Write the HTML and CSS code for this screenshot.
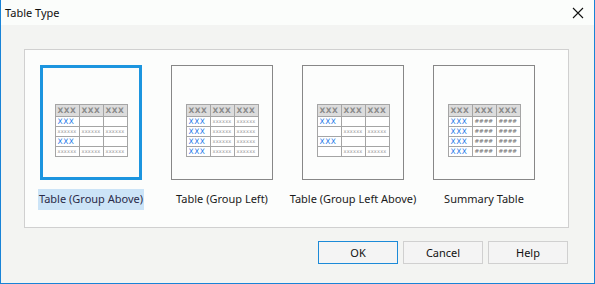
FILE: index.html
```html
<!DOCTYPE html>
<html lang="en">
  <head>
    <meta charset="UTF-8" />
    <title>Table Type</title>
    <link rel="stylesheet" href="styles.css">
  </head>
  <body>
    <div class="dialog">
      <div class="titlebar">
        <span class="title">Table Type</span>
        <svg class="close" width="12" height="12" viewBox="0 0 12 12">
          <path d="M1 1 L11 11 M11 1 L1 11" stroke="#111" stroke-width="1.1" />
        </svg>
      </div>
      <div class="content">
        <div class="panel">
          <div class="option">
            <div class="frame selected">
              <div class="mini">
                <div class="h">XXX</div><div class="h">XXX</div><div class="h">XXX</div>
                <div class="g">XXX</div><div></div><div></div>
                <div class="d">xxxxxx</div><div class="d">xxxxxx</div><div class="d">xxxxxx</div>
                <div class="g">XXX</div><div></div><div></div>
                <div class="d">xxxxxx</div><div class="d">xxxxxx</div><div class="d">xxxxxx</div>
              </div>
            </div>
            <div class="label selected">Table (Group Above)</div>
          </div>
          <div class="option">
            <div class="frame">
              <div class="mini">
                <div class="h">XXX</div><div class="h">XXX</div><div class="h">XXX</div>
                <div class="g">XXX</div><div class="d">xxxxxx</div><div class="d">xxxxxx</div>
                <div class="g">XXX</div><div class="d">xxxxxx</div><div class="d">xxxxxx</div>
                <div class="g">XXX</div><div class="d">xxxxxx</div><div class="d">xxxxxx</div>
                <div class="g">XXX</div><div class="d">xxxxxx</div><div class="d">xxxxxx</div>
              </div>
            </div>
            <div class="label">Table (Group Left)</div>
          </div>
          <div class="option">
            <div class="frame">
              <div class="mini">
                <div class="h">XXX</div><div class="h">XXX</div><div class="h">XXX</div>
                <div class="g">XXX</div><div></div><div></div>
                <div></div><div class="d">xxxxxx</div><div class="d">xxxxxx</div>
                <div class="g">XXX</div><div></div><div></div>
                <div></div><div class="d">xxxxxx</div><div class="d">xxxxxx</div>
              </div>
            </div>
            <div class="label">Table (Group Left Above)</div>
          </div>
          <div class="option">
            <div class="frame">
              <div class="mini">
                <div class="h">XXX</div><div class="h">XXX</div><div class="h">XXX</div>
                <div class="g">XXX</div><div class="s">####</div><div class="s">####</div>
                <div class="g">XXX</div><div class="s">####</div><div class="s">####</div>
                <div class="g">XXX</div><div class="s">####</div><div class="s">####</div>
                <div class="g">XXX</div><div class="s">####</div><div class="s">####</div>
              </div>
            </div>
            <div class="label">Summary Table</div>
          </div>
        </div>
        <div class="buttons">
          <button class="btn default">OK</button>
          <button class="btn">Cancel</button>
          <button class="btn">Help</button>
        </div>
      </div>
    </div>
  </body>
</html>
```

FILE: styles.css
```css
body {
  margin: 0;
  font-family: "Noto Sans", "Open Sans", sans-serif;
  font-size: 11px;
  color: #1a1a1a;
}
.dialog {
  width: 595px;
  height: 284px;
  box-sizing: border-box;
  border: 1px solid #1883d7;
  border-top: none;
  background: #f3f4f2;
  display: flex;
  flex-direction: column;
}
.titlebar {
  height: 25px;
  background: #fbfdfb;
  display: flex;
  align-items: center;
  justify-content: space-between;
  padding: 0 10px 0 4px;
  flex-shrink: 0;
}
.title {
  font-size: 11px;
  color: #101010;
}
.content {
  padding: 24px 25px 0 23px;
}
.panel {
  height: 179px;
  border: 1px solid #d0d0d0;
  background: #fcfdfc;
  display: flex;
  gap: 29px;
  padding: 15px 0 0 15px;
  box-sizing: border-box;
}
.option {
  width: 102px;
  display: flex;
  flex-direction: column;
  align-items: center;
}
.frame {
  width: 102px;
  height: 115px;
  box-sizing: border-box;
  border: 1px solid #878787;
  display: flex;
  justify-content: center;
  padding-top: 38px;
}
.frame.selected {
  border: 3px solid #1c95df;
  padding-top: 36px;
}
.mini {
  display: grid;
  grid-template-columns: repeat(3, 23px);
  grid-template-rows: 11px repeat(4, 9px);
  gap: 1px;
  background: #a5a5a5;
  border: 1px solid #a5a5a5;
  height: 51px;
  align-self: flex-start;
}
.mini div {
  background: #fff;
  font-family: "DejaVu Sans", sans-serif;
  font-size: 7px;
  line-height: 9px;
  color: #999;
  overflow: hidden;
  white-space: nowrap;
  padding-left: 2px;
}
.mini .h {
  background: #dcdcdc;
  color: #8a8a8a;
  font-size: 7.5px;
  font-weight: bold;
  line-height: 11px;
  letter-spacing: 0.5px;
}
.mini .g {
  color: #1f7ae8;
  font-size: 7.5px;
  line-height: 9px;
  letter-spacing: 0.5px;
}
.mini .d {
  font-size: 5px;
  letter-spacing: 0.2px;
}
.mini .s {
  font-size: 5.5px;
  font-weight: bold;
  color: #8a8a8a;
}
.label {
  margin-top: 9px;
  padding: 2px 1px 3px;
  white-space: nowrap;
  line-height: 16px;
}
.label.selected {
  background: #cce4f7;
  color: #2a2a48;
}
.buttons {
  display: flex;
  justify-content: flex-end;
  gap: 5px;
  margin-top: 13px;
  margin-right: 1px;
}
.btn {
  width: 80px;
  height: 23px;
  font-family: "Noto Sans", "Open Sans", sans-serif;
  font-size: 11px;
  color: #111;
  background: #f4f4f4;
  border: 1px solid #d0d0d0;
  padding: 0;
}
.btn.default {
  border-color: #1c8ad8;
}
```
